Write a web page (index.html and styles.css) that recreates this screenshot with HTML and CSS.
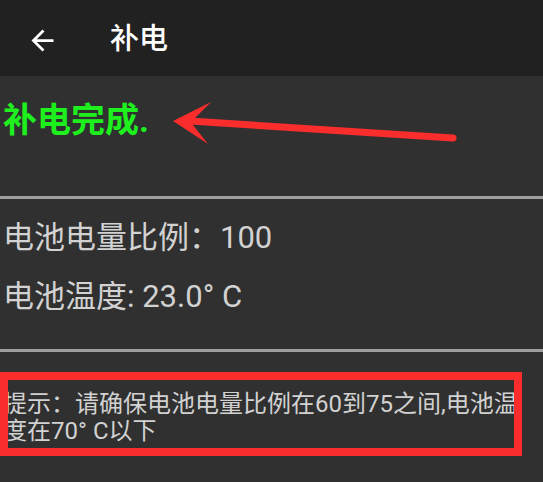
FILE: index.html
```html
<!DOCTYPE html>
<html lang="zh-CN">

<head>
    <meta charset="UTF-8">
    <meta name="viewport" content="width=device-width, initial-scale=1.0">
    <title>补电</title>
    <link rel="stylesheet" href="styles.css">
</head>

<body>
    <div class="toolbar">
        <button class="back-btn" aria-label="返回">
            <svg viewBox="0 0 24 24" width="33" height="33">
                <path d="M20 11H7.83l5.59-5.59L12 4l-8 8 8 8 1.41-1.41L7.83 13H20v-2z" fill="#fff" />
            </svg>
        </button>
        <h1>补电</h1>
    </div>

    <div class="status">
        <p class="status-text">补电完成.</p>
        <!-- annotation arrow -->
        <svg class="mark-arrow" viewBox="0 0 543 120" width="543" height="120">
            <line x1="190" y1="45" x2="453" y2="62" stroke="#fa2d2d" stroke-width="7" stroke-linecap="round" />
            <polygon points="173,45 211,26 193,44 193,49 208,68" fill="#fa2d2d" />
        </svg>
    </div>

    <div class="divider"></div>

    <div class="info">
        <p>电池电量比例：100</p>
        <p>电池温度: 23.0° C</p>
    </div>

    <div class="divider"></div>

    <div class="hint">
        <p>提示：请确保电池电量比例在60到75之间,电池温度在70° C以下</p>
        <div class="mark-box"></div>
    </div>
</body>

</html>
```

FILE: styles.css
```css
* {
    margin: 0;
    padding: 0;
    box-sizing: border-box;
}

body {
    font-family: Roboto, "Noto Sans CJK SC", sans-serif;
    background-color: #303030;
    color: #d2d2d2;
    width: 543px;
    height: 482px;
    overflow: hidden;
}

.toolbar {
    height: 76px;
    background-color: #212121;
    display: flex;
    align-items: center;
    padding-left: 26px;
}

.back-btn {
    width: 33px;
    height: 33px;
    background: none;
    border: none;
    display: flex;
    margin-top: 4px;
}

.toolbar h1 {
    color: #fff;
    font-size: 29px;
    font-weight: 500;
    margin-left: 51px;
    margin-bottom: 4px;
}

.status {
    position: relative;
    height: 120px;
    padding: 22px 0 0 3px;
}

.status-text {
    color: #1ef01e;
    font-size: 34px;
    font-weight: bold;
    line-height: 44px;
}

.mark-arrow {
    position: absolute;
    top: 0;
    left: 0;
}

.divider {
    height: 3px;
    background-color: #9e9e9e;
}

.info {
    height: 150px;
    padding: 9px 0 0 3px;
    font-size: 31px;
    line-height: 59px;
}

.hint {
    position: relative;
    padding: 39px 24px 0 3px;
    font-size: 24px;
    line-height: 27px;
}

.mark-box {
    position: absolute;
    top: 20px;
    left: 0;
    width: 522px;
    height: 84px;
    border: 8px solid #fa2d2d;
}
```
